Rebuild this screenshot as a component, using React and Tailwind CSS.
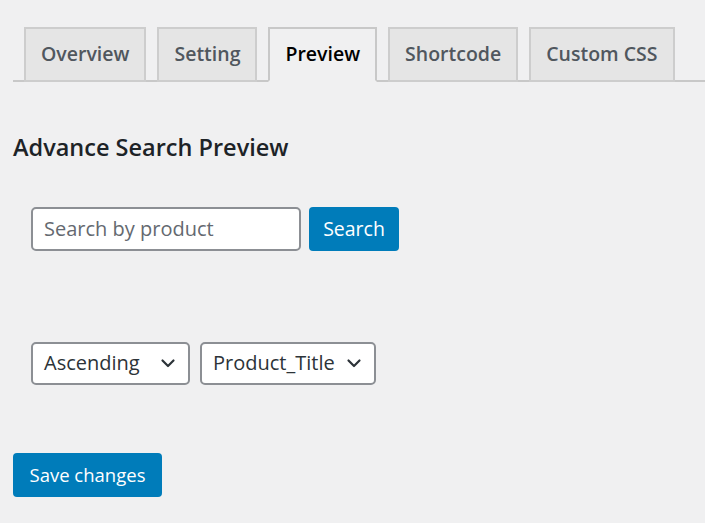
import React from "react";

const tabs = ["Overview", "Setting", "Preview", "Shortcode", "Custom CSS"];

const Chevron = () => (
  <svg width="16" height="16" viewBox="0 0 16 16" fill="none" className="shrink-0">
    <path d="M2.5 5.5 8 11l5.5-5.5" stroke="#2c3338" strokeWidth="2.2" strokeLinecap="round" strokeLinejoin="round" />
  </svg>
);

export default function App() {
  return (
    <div
      className="min-h-[523px] bg-[#f0f0f1] pl-[13px] pt-[27px]"
      style={{ fontFamily: '"Open Sans", "Noto Sans", sans-serif' }}
    >
      {/* Tabs */}
      <div className="flex items-end border-b-2 border-[#c8c8c8] pl-[11px]">
        {tabs.map((t, i) => {
          const active = t === "Preview";
          return (
            <div
              key={t}
              className={`h-[55px] px-[15px] pb-[2px] flex items-center text-[19.5px] font-semibold border-2 mb-[-2px] ${
                i > 0 ? "ml-[11px]" : ""
              } ${
                active
                  ? "bg-[#f0f0f1] border-[#c8c8c8] border-b-[#f0f0f1] text-black"
                  : "bg-[#e5e5e5] border-[#cdcdcd] text-[#50575e]"
              }`}
            >
              {t}
            </div>
          );
        })}
      </div>

      {/* Title */}
      <h2 className="mt-[54px] text-[23.5px] font-semibold text-[#1d2327] leading-none">
        Advance Search Preview
      </h2>

      {/* Search */}
      <div className="mt-[47px] ml-[18px] flex gap-[8px]">
        <div className="w-[270px] h-[44px] bg-white border-2 border-[#8c8f94] rounded-[5px] flex items-center px-[11px] text-[20px] text-[#646970]">
          Search by product
        </div>
        <div className="w-[90px] h-[44px] bg-[#007cba] rounded-[4px] flex items-center justify-center text-[19.5px] text-white">
          Search
        </div>
      </div>

      {/* Selects */}
      <div className="mt-[91px] ml-[18px] flex gap-[10px]">
        <div className="w-[159px] h-[43px] bg-white border-2 border-[#8c8f94] rounded-[5px] flex items-center justify-between pl-[11px] pr-[12px] text-[20px] text-[#2c3338]">
          <span>Ascending</span>
          <Chevron />
        </div>
        <div className="w-[176px] h-[43px] bg-white border-2 border-[#8c8f94] rounded-[5px] flex items-center justify-between pl-[11px] pr-[12px] text-[20px] text-[#2c3338]">
          <span>Product_Title</span>
          <Chevron />
        </div>
      </div>

      {/* Save */}
      <div className="mt-[68px] w-[149px] h-[44px] bg-[#007cba] rounded-[4px] flex items-center justify-center text-[18.5px] text-white">
        Save changes
      </div>
    </div>
  );
}
